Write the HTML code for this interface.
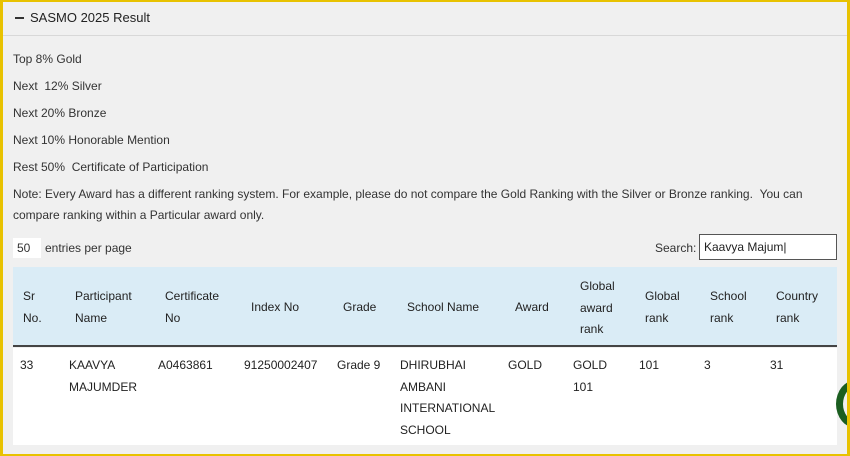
<!DOCTYPE html>
<html><head><style>
*{margin:0;padding:0;box-sizing:border-box}
body{width:850px;height:456px;overflow:hidden;background:#e8c200;font-family:"Liberation Sans",sans-serif;color:#333;font-size:12px}
.wrap{position:absolute;left:3px;top:2px;width:844px;height:452px;background:#f0f0f0;overflow:hidden}
.t{position:absolute;white-space:nowrap}
.hdr{position:absolute;left:0;top:33px;width:844px;height:1px;background:#d8d8d8}
.th{position:absolute;left:10px;top:265px;width:824px;height:80px;background:#daecf6;border-bottom:2px solid #444}
.tb{position:absolute;left:10px;top:346px;width:824px;height:97px;background:#fff}
.c{position:absolute;line-height:21.5px;font-size:12px;color:#222}
</style></head><body><div class="wrap">
<div class="t" style="left:12px;width:9px;height:2px;background:#333;top:15px"></div>
<div class="t" style="left:27px;top:8px;font-size:13px;color:#222">SASMO 2025 Result</div>
<div class="hdr"></div>
<div class="t" style="left:10px;top:50px">Top 8% Gold</div>
<div class="t" style="left:10px;top:77px">Next &nbsp;12% Silver</div>
<div class="t" style="left:10px;top:104px">Next 20% Bronze</div>
<div class="t" style="left:10px;top:131px">Next 10% Honorable Mention</div>
<div class="t" style="left:10px;top:158px">Rest 50% &nbsp;Certificate of Participation</div>
<div class="t" style="left:10px;top:185px">Note: Every Award has a different ranking system. For example, please do not compare the Gold Ranking with the Silver or Bronze ranking. &nbsp;You can</div>
<div class="t" style="left:10px;top:206px">compare ranking within a Particular award only.</div>
<div class="t" style="left:10px;top:236px;width:28px;height:20px;background:#fff;padding:3px 4px">50</div>
<div class="t" style="left:42px;top:239px">entries per page</div>
<div class="t" style="left:652px;top:239px">Search:</div>
<div class="t" style="left:696px;top:232px;width:138px;height:26px;background:#fff;border:1px solid #555;padding:5px 4px;color:#222">Kaavya Majum|</div>
<div class="th"></div>
<div class="tb"></div>
<div class="c" style="left:20px;top:284px">Sr<br>No.</div>
<div class="c" style="left:72px;top:284px">Participant<br>Name</div>
<div class="c" style="left:162px;top:284px">Certificate<br>No</div>
<div class="c" style="left:248px;top:295px">Index No</div>
<div class="c" style="left:340px;top:295px">Grade</div>
<div class="c" style="left:404px;top:295px">School Name</div>
<div class="c" style="left:512px;top:295px">Award</div>
<div class="c" style="left:577px;top:274px">Global<br>award<br>rank</div>
<div class="c" style="left:642px;top:284px">Global<br>rank</div>
<div class="c" style="left:707px;top:284px">School<br>rank</div>
<div class="c" style="left:773px;top:284px">Country<br>rank</div>
<div class="c" style="left:17px;top:353px">33</div>
<div class="c" style="left:66px;top:353px">KAAVYA<br>MAJUMDER</div>
<div class="c" style="left:155px;top:353px">A0463861</div>
<div class="c" style="left:241px;top:353px">91250002407</div>
<div class="c" style="left:334px;top:353px">Grade 9</div>
<div class="c" style="left:397px;top:353px">DHIRUBHAI<br>AMBANI<br>INTERNATIONAL<br>SCHOOL</div>
<div class="c" style="left:505px;top:353px">GOLD</div>
<div class="c" style="left:570px;top:353px">GOLD<br>101</div>
<div class="c" style="left:636px;top:353px">101</div>
<div class="c" style="left:701px;top:353px">3</div>
<div class="c" style="left:767px;top:353px">31</div>
<div class="t" style="left:833px;top:378px;width:40px;height:48px;border-radius:50%;border:7px solid #1b5e20"></div>
</div></body></html>
